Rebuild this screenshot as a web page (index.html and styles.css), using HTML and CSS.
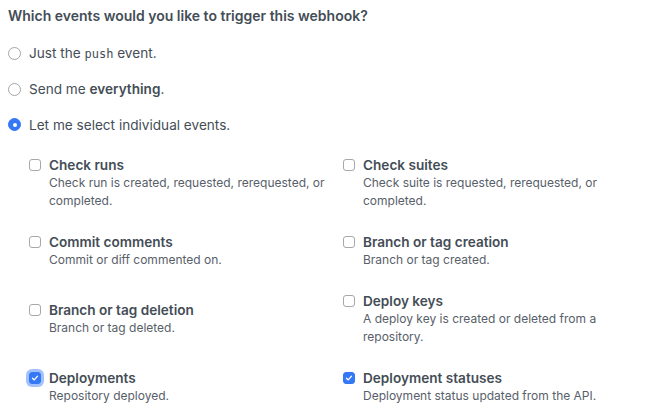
FILE: index.html
```html
<!DOCTYPE html>
<html>
<head>
<meta charset="utf-8">
<link rel="stylesheet" href="styles.css">
</head>
<body>
<div class="page">
  <h2 class="question">Which events would you like to trigger this webhook?</h2>
  <div class="radios">
    <label class="radio-row"><span class="radio"></span><span>Just the <code>push</code> event.</span></label>
    <label class="radio-row"><span class="radio"></span><span>Send me <strong>everything</strong>.</span></label>
    <label class="radio-row"><span class="radio radio-on"></span><span>Let me select individual events.</span></label>
  </div>
  <div class="events">
    <div class="col">
      <div class="event">
        <span class="box"></span>
        <div class="text"><div class="title">Check runs</div><div class="desc">Check run is created, requested, rerequested, or completed.</div></div>
      </div>
      <div class="event wide-gap">
        <span class="box"></span>
        <div class="text"><div class="title">Commit comments</div><div class="desc">Commit or diff commented on.</div></div>
      </div>
      <div class="event wide-gap">
        <span class="box"></span>
        <div class="text"><div class="title">Branch or tag deletion</div><div class="desc">Branch or tag deleted.</div></div>
      </div>
      <div class="event">
        <span class="box box-on box-focus"><svg viewBox="0 0 12 12" width="12" height="12"><path d="M3 6.2 L5.1 8.3 L9 3.8" fill="none" stroke="#fff" stroke-width="1.6" stroke-linecap="round" stroke-linejoin="round"/></svg></span>
        <div class="text"><div class="title">Deployments</div><div class="desc">Repository deployed.</div></div>
      </div>
    </div>
    <div class="col">
      <div class="event">
        <span class="box"></span>
        <div class="text"><div class="title">Check suites</div><div class="desc">Check suite is requested, rerequested, or completed.</div></div>
      </div>
      <div class="event">
        <span class="box"></span>
        <div class="text"><div class="title">Branch or tag creation</div><div class="desc">Branch or tag created.</div></div>
      </div>
      <div class="event">
        <span class="box"></span>
        <div class="text"><div class="title">Deploy keys</div><div class="desc">A deploy key is created or deleted from a repository.</div></div>
      </div>
      <div class="event">
        <span class="box box-on"><svg viewBox="0 0 12 12" width="12" height="12"><path d="M3 6.2 L5.1 8.3 L9 3.8" fill="none" stroke="#fff" stroke-width="1.6" stroke-linecap="round" stroke-linejoin="round"/></svg></span>
        <div class="text"><div class="title">Deployment statuses</div><div class="desc">Deployment status updated from the API.</div></div>
      </div>
    </div>
  </div>
</div>
</body>
</html>
```
FILE: styles.css
```css
* { box-sizing: border-box; }
html, body { margin: 0; background: #fff; }
body {
  font-family: Inter, "Noto Sans", "Liberation Sans", sans-serif;
  color: #444d56;
}
.page { padding: 6px 0 0 8px; }
.question {
  margin: 0;
  font-size: 14px;
  line-height: 20px;
  font-weight: 600;
  color: #444d56;
}
.radios { margin-top: 16.5px; display: flex; flex-direction: column; gap: 15.5px; }
.radio-row {
  display: flex;
  align-items: center;
  gap: 8px;
  font-size: 13.6px;
  line-height: 20px;
  color: #444d56;
}
.radio-row strong { font-weight: 600; }
.radio-row code {
  font-family: "DejaVu Sans Mono", "Liberation Mono", monospace;
  font-size: 12px;
}
.radio {
  width: 13px; height: 13px;
  border-radius: 50%;
  border: 1px solid #a5a5a5;
  background: #fff;
  flex: none;
  position: relative;
}
.radio-on { background: #3478f6; border-color: #3478f6; }
.radio-on::after {
  content: "";
  position: absolute;
  left: 3.5px; top: 3.5px;
  width: 4px; height: 4px;
  border-radius: 50%;
  background: #fff;
}
.events { display: flex; margin-top: 21.5px; padding-left: 21px; }
.col { width: 314px; display: flex; flex-direction: column; }
.event { display: flex; gap: 8px; margin-bottom: 23px; }
.event.wide-gap { margin-bottom: 32px; }
.box {
  flex: none;
  width: 12px; height: 12px;
  margin-top: 3px;
  border: 1px solid #a8a8a8;
  border-radius: 3px;
  background: #fff;
  display: flex;
  align-items: center;
  justify-content: center;
}
.box svg { display: block; }
.box-on { background: #3478f6; border-color: #3478f6; }
.box-focus { box-shadow: 0 0 0 3px rgba(52, 120, 246, 0.45); }
.text { display: flex; flex-direction: column; }
.title { font-size: 13.6px; line-height: 18px; font-weight: 600; color: #444d56; }
.desc { font-size: 12px; line-height: 18px; color: #586069; max-width: 290px; }
```
